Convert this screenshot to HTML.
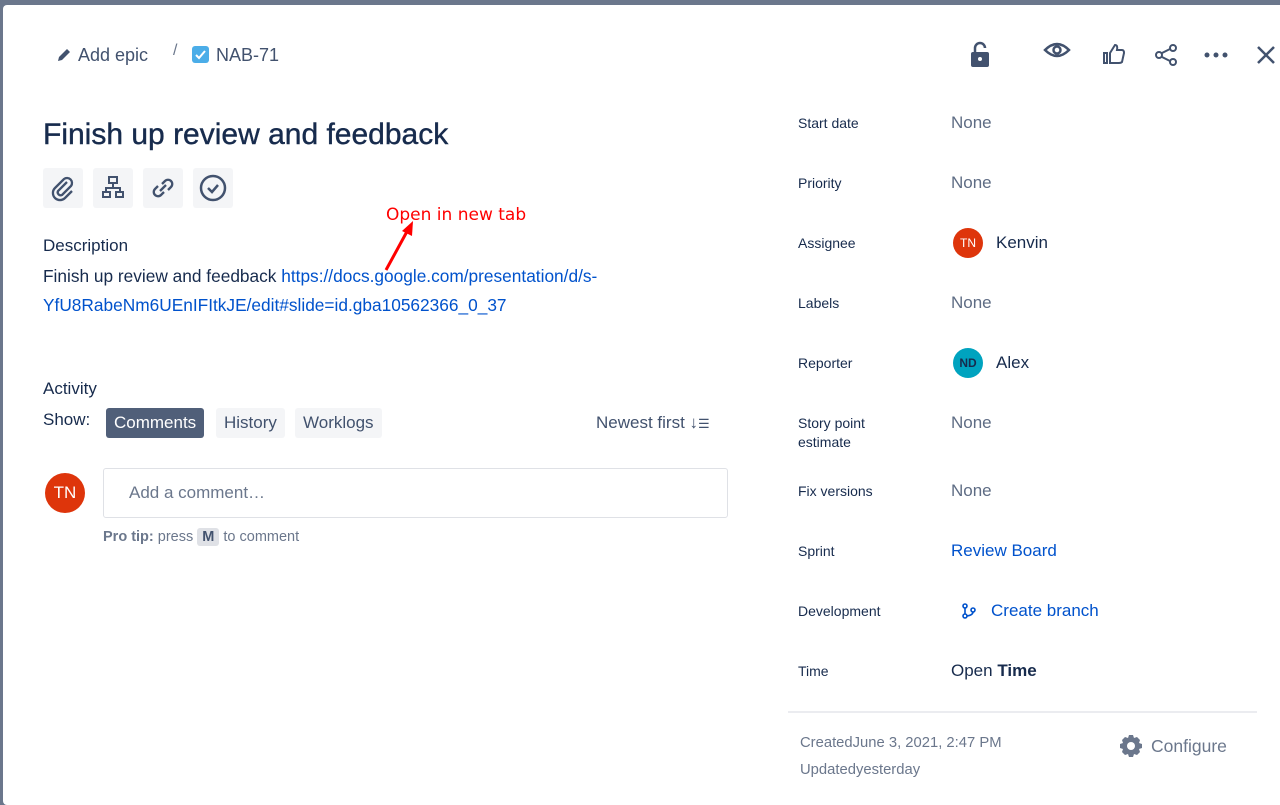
<!DOCTYPE html>
<html><head><meta charset="utf-8"><style>
*{margin:0;padding:0;box-sizing:border-box}
body{width:1280px;height:800px;background:#6b778c;font-family:"Liberation Sans",sans-serif;position:relative;overflow:hidden;color:#172b4d}
#m{position:absolute;left:3px;top:5px;width:1290px;height:800px;background:#fff;border-radius:4px}
.a{position:absolute;white-space:nowrap}
.lab{position:absolute;left:798px;font-size:14px;color:#172b4d}
.val{position:absolute;left:951px;font-size:17px;color:#5e6c84}
.ib{position:absolute;top:168px;width:40px;height:40px;background:#f4f5f7;border-radius:3px}
.tab{position:absolute;top:408px;height:30px;font-size:17px;line-height:30px;padding:0 8px;border-radius:3px;background:#f4f5f7;color:#42526e}
.av{position:absolute;border-radius:50%;color:#fff;text-align:center}
</style></head><body>
<div id="m"></div>
<svg class="a" style="left:56px;top:47px" width="16" height="16" viewBox="0 0 16 16"><path d="M2 14l1-4 8-8 3 3-8 8z" fill="#42526e"/></svg>
<div class="a" style="left:78px;top:45px;font-size:18px;color:#42526e">Add epic</div>
<div class="a" style="left:173px;top:42px;font-size:16px;color:#6b778c">/</div>
<svg class="a" style="left:192px;top:46px" width="17" height="17"><rect width="17" height="17" rx="3" fill="#4bade8"/><path d="M4 9l3 3 6-7" stroke="#fff" stroke-width="2" fill="none"/></svg>
<div class="a" style="left:216px;top:45px;font-size:18px;color:#42526e">NAB-71</div>
<svg class="a" style="left:969px;top:41px" width="22" height="26" viewBox="0 0 22 26"><path d="M6 11V7a5 5 0 0 1 10 0" stroke="#42526e" stroke-width="2.5" fill="none"/><rect x="2" y="11" width="18" height="15" rx="2" fill="#42526e"/><circle cx="11" cy="18" r="2" fill="#fff"/></svg>
<svg class="a" style="left:1043px;top:40px" width="28" height="20"><path d="M2 10Q14-2 26 10Q14 22 2 10z" stroke="#42526e" stroke-width="2.5" fill="none"/><circle cx="14" cy="10" r="3.5" stroke="#42526e" stroke-width="2.5" fill="none"/></svg>
<svg class="a" style="left:1103px;top:43px" width="22" height="22"><path d="M1 10v10h3V10zM7 20V10l5-8q3 0 2 5h5q2 0 2 3l-2 9q-1 1-3 1z" stroke="#42526e" stroke-width="2" fill="none"/></svg>
<svg class="a" style="left:1154px;top:43px" width="24" height="24"><circle cx="19" cy="5" r="3" stroke="#42526e" stroke-width="2" fill="none"/><circle cx="19" cy="19" r="3" stroke="#42526e" stroke-width="2" fill="none"/><circle cx="5" cy="12" r="3" stroke="#42526e" stroke-width="2" fill="none"/><path d="M8 10l8-4M8 14l8 4" stroke="#42526e" stroke-width="2"/></svg>
<svg class="a" style="left:1204px;top:51px" width="24" height="8"><circle cx="3" cy="4" r="2.5" fill="#42526e"/><circle cx="12" cy="4" r="2.5" fill="#42526e"/><circle cx="21" cy="4" r="2.5" fill="#42526e"/></svg>
<svg class="a" style="left:1256px;top:45px" width="20" height="20"><path d="M2 2l16 16M18 2L2 18" stroke="#42526e" stroke-width="2.5"/></svg>

<div class="a" style="left:43px;top:118px;font-size:30px;color:#172b4d;-webkit-text-stroke:0.4px #172b4d">Finish up review and feedback</div>
<div class="ib" style="left:43px"><svg width="40" height="40"><path d="M24 14l-9 9a3 3 0 0 0 4 4l9-9a5 5 0 0 0-7-7l-9 9a7 7 0 0 0 10 10l7-7" stroke="#42526e" stroke-width="2.3" fill="none"/></svg></div>
<div class="ib" style="left:93px"><svg width="40" height="40"><rect x="16" y="9" width="8" height="6" stroke="#42526e" stroke-width="2" fill="none"/><rect x="10" y="24" width="7" height="5" stroke="#42526e" stroke-width="2" fill="none"/><rect x="23" y="24" width="7" height="5" stroke="#42526e" stroke-width="2" fill="none"/><path d="M20 15v5M13 24v-4h14v4" stroke="#42526e" stroke-width="2" fill="none"/></svg></div>
<div class="ib" style="left:143px"><svg width="40" height="40"><path d="M19 16l3-3a4 4 0 0 1 6 6l-3 3M21 24l-3 3a4 4 0 0 1-6-6l3-3M17 23l6-6" stroke="#42526e" stroke-width="2.3" fill="none"/></svg></div>
<div class="ib" style="left:193px"><svg width="40" height="40"><circle cx="20" cy="20" r="12" stroke="#42526e" stroke-width="2.5" fill="none"/><path d="M15 20l4 4 6-7" stroke="#42526e" stroke-width="2.5" fill="none"/></svg></div>

<div class="a" style="left:386px;top:205px;font-size:17px;color:#f00;font-family:'DejaVu Sans',sans-serif">Open in new tab</div>
<svg class="a" style="left:380px;top:218px" width="40" height="56"><path d="M6 52L30 8" stroke="#f00" stroke-width="3"/><path d="M33 3l-11 10 10 5z" fill="#f00"/></svg>

<div class="a" style="left:43px;top:236px;font-size:17px;color:#172b4d">Description</div>
<div class="a" style="left:43px;top:262px;font-size:17.3px;line-height:29px;color:#172b4d">Finish up review and feedback <span style="color:#0052cc">https://docs.google.com/presentation/d/s-</span><br><span style="color:#0052cc">YfU8RabeNm6UEnIFItkJE/edit#slide=id.gba10562366_0_37</span></div>

<div class="a" style="left:43px;top:379px;font-size:17px">Activity</div>
<div class="a" style="left:43px;top:410px;font-size:17px">Show:</div>
<div class="tab" style="left:106px;background:#505f79;color:#fff">Comments</div>
<div class="tab" style="left:216px">History</div>
<div class="tab" style="left:295px">Worklogs</div>
<div class="a" style="left:596px;top:413px;font-size:17px;color:#42526e">Newest first ↓<span style="font-size:13px">☰</span></div>

<div class="av" style="left:45px;top:473px;width:40px;height:40px;background:#de350b;font-size:17px;line-height:40px">TN</div>
<div class="a" style="left:103px;top:468px;width:625px;height:50px;border:1px solid #dfe1e6;border-radius:3px"></div>
<div class="a" style="left:129px;top:483px;font-size:17px;color:#6b778c">Add a comment…</div>
<div class="a" style="left:103px;top:529px;font-size:14.5px;color:#6b778c"><b>Pro tip:</b> press <span style="background:#dfe1e6;padding:1px 5px;border-radius:3px;font-weight:bold;color:#42526e">M</span> to comment</div>

<div class="lab" style="top:115px">Start date</div><div class="val" style="top:113px">None</div>
<div class="lab" style="top:175px">Priority</div><div class="val" style="top:173px">None</div>
<div class="lab" style="top:235px">Assignee</div>
<div class="av" style="left:953px;top:228px;width:30px;height:30px;background:#de350b;font-size:12px;line-height:30px">TN</div>
<div class="val" style="left:996px;top:233px;color:#172b4d">Kenvin</div>
<div class="lab" style="top:295px">Labels</div><div class="val" style="top:293px">None</div>
<div class="lab" style="top:355px">Reporter</div>
<div class="av" style="left:953px;top:348px;width:30px;height:30px;background:#00a3bf;font-size:12px;line-height:30px;color:#172b4d;font-weight:bold">ND</div>
<div class="val" style="left:996px;top:353px;color:#172b4d">Alex</div>
<div class="lab" style="top:414px;line-height:19px">Story point<br>estimate</div><div class="val" style="top:413px">None</div>
<div class="lab" style="top:483px">Fix versions</div><div class="val" style="top:481px">None</div>
<div class="lab" style="top:543px">Sprint</div><div class="val" style="top:541px;color:#0052cc">Review Board</div>
<div class="lab" style="top:603px">Development</div>
<svg class="a" style="left:962px;top:603px" width="14" height="16"><circle cx="3" cy="3" r="2" stroke="#0052cc" stroke-width="1.6" fill="none"/><circle cx="3" cy="13" r="2" stroke="#0052cc" stroke-width="1.6" fill="none"/><circle cx="11" cy="7" r="2" stroke="#0052cc" stroke-width="1.6" fill="none"/><path d="M3 5v6M11 9q0 3-6 4" stroke="#0052cc" stroke-width="1.6" fill="none"/></svg>
<div class="val" style="left:991px;top:601px;color:#0052cc">Create branch</div>
<div class="lab" style="top:663px">Time</div><div class="val" style="top:661px;color:#172b4d">Open <b>Time</b></div>
<div class="a" style="left:788px;top:711px;width:469px;height:2px;background:#ebecf0"></div>
<div class="a" style="left:800px;top:735px;font-size:14.8px;color:#6b778c">CreatedJune 3, 2021, 2:47 PM</div>
<div class="a" style="left:800px;top:762px;font-size:14.8px;color:#6b778c">Updatedyesterday</div>
<svg class="a" style="left:1119px;top:734px" width="24" height="24" viewBox="0 0 24 24"><path d="M10 1h4l1 3 3-1 3 3-1 3 3 1v4l-3 1 1 3-3 3-3-1-1 3h-4l-1-3-3 1-3-3 1-3-3-1v-4l3-1-1-3 3-3 3 1z" fill="#6b778c"/><circle cx="12" cy="12" r="4" fill="#fff"/></svg>
<div class="a" style="left:1151px;top:736px;font-size:17.5px;color:#6b778c">Configure</div>
</body></html>
